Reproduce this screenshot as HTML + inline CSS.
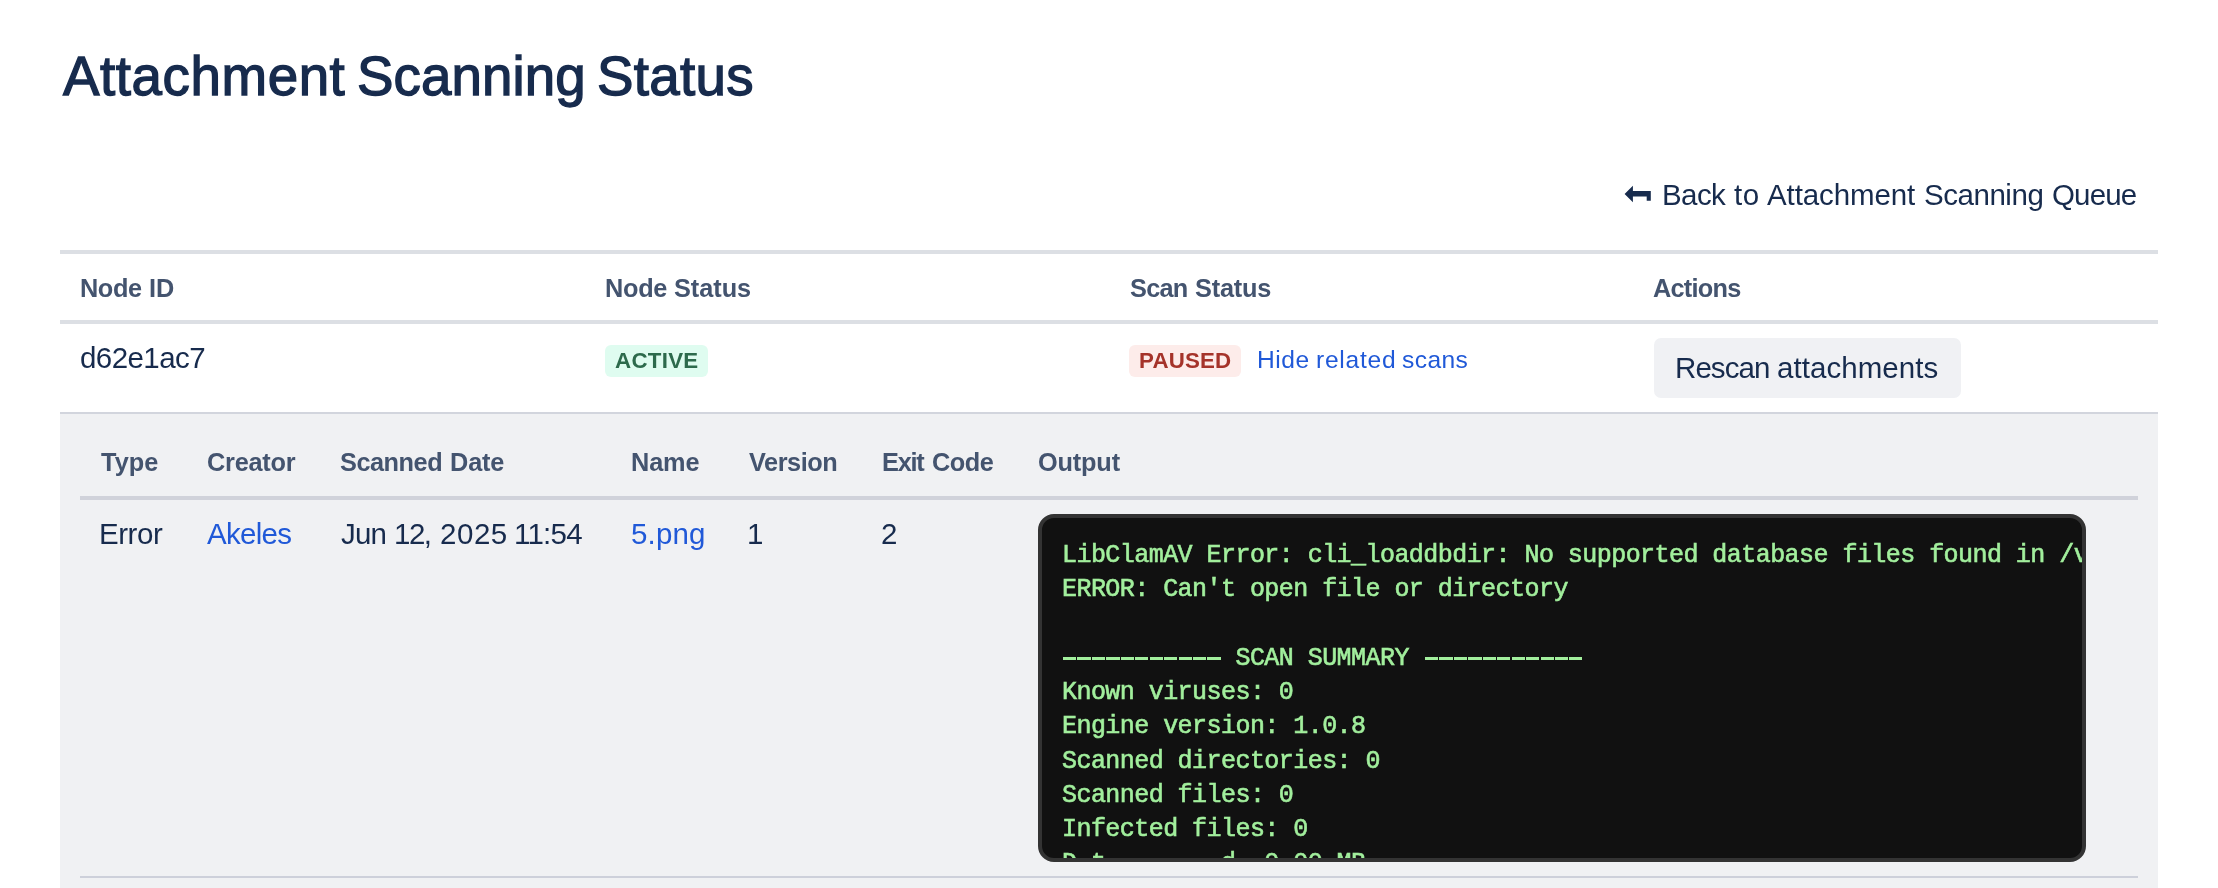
<!DOCTYPE html>
<html><head><meta charset="utf-8"><title>Attachment Scanning Status</title>
<style>
html,body{margin:0;padding:0;background:#fff;}
body{width:2218px;height:888px;position:relative;overflow:hidden;font-family:"Liberation Sans",sans-serif;}
.t{position:absolute;white-space:nowrap;line-height:40px;height:40px;will-change:transform;}
.ln{position:absolute;}
.box{position:absolute;}
pre{margin:0;font-family:"Liberation Mono",monospace;will-change:transform;}
pre i{visibility:hidden;font-style:normal}
.dash{color:transparent;-webkit-text-stroke:0;background:repeating-linear-gradient(to right,#A2EF9D 0,#A2EF9D 13.2px,transparent 13.2px,transparent 14.45px) no-repeat;background-size:100% 3.2px;background-position:1.33px 12.7px;}
</style></head><body>
<div class="ln" style="left:60px;top:250px;width:2098px;height:4px;background:#DCDFE4"></div>
<div class="ln" style="left:60px;top:320px;width:2098px;height:4px;background:#DCDFE4"></div>
<div class="ln" style="left:60px;top:412px;width:2098px;height:2px;background:#D2D5DD"></div>
<div class="box" style="left:60px;top:414px;width:2098px;height:474px;background:#F0F1F3"></div>
<div class="ln" style="left:80px;top:496px;width:2058px;height:4px;background:#D0D2DA"></div>
<div class="ln" style="left:80px;top:876px;width:2058px;height:2px;background:#CDD0DA"></div>
<div class="box" style="left:605px;top:345px;width:103px;height:32px;border-radius:6px;background:#DFFCF0"></div>
<div class="box" style="left:1129px;top:345px;width:112px;height:32px;border-radius:6px;background:#FDECEA"></div>
<div class="box" style="left:1654px;top:338px;width:307px;height:60px;border-radius:7px;background:#F0F1F4"></div>
<svg class="box" style="left:1620px;top:180px" width="40" height="30" viewBox="0 0 40 30"><path d="M4.6 13.9 L12.9 5.7 L12.9 11.1 L30.8 11.1 L30.8 20.7 L26.7 20.7 L26.7 16.6 L12.9 16.6 L12.9 22.3 Z" fill="#172B4D"/></svg>
<div class="box" id="code" style="left:1038px;top:514px;width:1040px;height:340px;border:4px solid #333;border-radius:16px;background:#111;overflow:hidden"><pre id="pre" style="position:absolute;left:19.73px;top:21.40px;font-size:25.0px;letter-spacing:-0.550px;line-height:34.286px;color:#A2EF9D;-webkit-text-stroke:0.6px #A2EF9D;white-space:pre">LibClamAV Error: cli_loaddbdir: No supported database files found in /var/lib/clamav
ERROR: Can't open file or directory

<span class="dash">-----------</span> SCAN SUMMARY <span class="dash">-----------</span>
Known viruses: 0
Engine version: 1.0.8
Scanned directories: 0
Scanned files: 0
Infected files: 0
<span style="position:relative;top:-0.7px">D<i>a</i>t<i>a scanne</i>d<i>:</i> 0.00 MB</span>
Data read: 0.00 MB (ratio 0.00:1)
Time: 0.005 sec (0 m 0 s)</pre></div>
<div class="t" id="title_0" style="left:62.50px;top:56.45px;font-size:54.7px;font-weight:400;color:#172B4D;letter-spacing:0.578px;-webkit-text-stroke:1.35px #172B4D;">Attachment</div>
<div class="t" id="title_1" style="left:357.00px;top:56.45px;font-size:54.7px;font-weight:400;color:#172B4D;letter-spacing:0.086px;-webkit-text-stroke:1.35px #172B4D;">Scanning</div>
<div class="t" id="title_2" style="left:597.00px;top:56.45px;font-size:54.7px;font-weight:400;color:#172B4D;letter-spacing:0.320px;-webkit-text-stroke:1.35px #172B4D;">Status</div>
<div class="t" id="back_0" style="left:1662.00px;top:174.98px;font-size:29.5px;font-weight:400;color:#172B4D;letter-spacing:-0.600px;">Back</div>
<div class="t" id="back_1" style="left:1733.50px;top:174.98px;font-size:29.5px;font-weight:400;color:#172B4D;letter-spacing:0.600px;">to</div>
<div class="t" id="back_2" style="left:1767.00px;top:174.98px;font-size:29.5px;font-weight:400;color:#172B4D;letter-spacing:-0.111px;">Attachment</div>
<div class="t" id="back_3" style="left:1924.00px;top:174.98px;font-size:29.5px;font-weight:400;color:#172B4D;letter-spacing:-0.457px;">Scanning</div>
<div class="t" id="back_4" style="left:2051.50px;top:174.98px;font-size:29.5px;font-weight:400;color:#172B4D;letter-spacing:-0.850px;">Queue</div>
<div class="t" id="h1_0" style="left:80.00px;top:268.23px;font-size:25.3px;font-weight:700;color:#44546F;letter-spacing:-0.400px;">Node</div>
<div class="t" id="h1_1" style="left:148.50px;top:268.23px;font-size:25.3px;font-weight:700;color:#44546F;letter-spacing:0.000px;">ID</div>
<div class="t" id="h2_0" style="left:605.00px;top:268.23px;font-size:25.3px;font-weight:700;color:#44546F;letter-spacing:-0.267px;">Node</div>
<div class="t" id="h2_1" style="left:673.50px;top:268.23px;font-size:25.3px;font-weight:700;color:#44546F;letter-spacing:-0.040px;">Status</div>
<div class="t" id="h3_0" style="left:1129.50px;top:268.23px;font-size:25.3px;font-weight:700;color:#44546F;letter-spacing:-0.733px;">Scan</div>
<div class="t" id="h3_1" style="left:1194.50px;top:268.23px;font-size:25.3px;font-weight:700;color:#44546F;letter-spacing:-0.200px;">Status</div>
<div class="t" id="h4" style="left:1653.40px;top:268.23px;font-size:25.3px;font-weight:700;color:#44546F;letter-spacing:-0.733px;">Actions</div>
<div class="t" id="nid" style="left:80.00px;top:337.58px;font-size:29.5px;font-weight:400;color:#172B4D;letter-spacing:-0.571px;">d62e1ac7</div>
<div class="t" id="active" style="left:614.50px;top:340.97px;font-size:22.3px;font-weight:700;color:#2D6A4C;letter-spacing:0.280px;">ACTIVE</div>
<div class="t" id="paused" style="left:1139.00px;top:340.97px;font-size:22.3px;font-weight:700;color:#A5332A;letter-spacing:0.160px;">PAUSED</div>
<div class="t" id="hide_0" style="left:1256.50px;top:340.18px;font-size:24.6px;font-weight:400;color:#2059D8;letter-spacing:0.533px;">Hide</div>
<div class="t" id="hide_1" style="left:1316.00px;top:340.18px;font-size:24.6px;font-weight:400;color:#2059D8;letter-spacing:0.733px;">related</div>
<div class="t" id="hide_2" style="left:1401.50px;top:340.18px;font-size:24.6px;font-weight:400;color:#2059D8;letter-spacing:0.400px;">scans</div>
<div class="t" id="btn_0" style="left:1675.00px;top:347.88px;font-size:29.5px;font-weight:400;color:#172B4D;letter-spacing:-0.920px;">Rescan</div>
<div class="t" id="btn_1" style="left:1777.00px;top:347.88px;font-size:29.5px;font-weight:400;color:#172B4D;letter-spacing:0.060px;">attachments</div>
<div class="t" id="n1" style="left:100.60px;top:441.83px;font-size:25.3px;font-weight:700;color:#44546F;letter-spacing:0.067px;">Type</div>
<div class="t" id="n2" style="left:207.40px;top:441.83px;font-size:25.3px;font-weight:700;color:#44546F;letter-spacing:-0.233px;">Creator</div>
<div class="t" id="n3_0" style="left:340.00px;top:441.83px;font-size:25.3px;font-weight:700;color:#44546F;letter-spacing:-0.467px;">Scanned</div>
<div class="t" id="n3_1" style="left:449.50px;top:441.83px;font-size:25.3px;font-weight:700;color:#44546F;letter-spacing:-0.133px;">Date</div>
<div class="t" id="n4" style="left:631.40px;top:441.83px;font-size:25.3px;font-weight:700;color:#44546F;letter-spacing:-0.133px;">Name</div>
<div class="t" id="n5" style="left:749.00px;top:441.83px;font-size:25.3px;font-weight:700;color:#44546F;letter-spacing:-0.433px;">Version</div>
<div class="t" id="n6_0" style="left:881.50px;top:441.83px;font-size:25.3px;font-weight:700;color:#44546F;letter-spacing:-1.200px;">Exit</div>
<div class="t" id="n6_1" style="left:931.50px;top:441.83px;font-size:25.3px;font-weight:700;color:#44546F;letter-spacing:-0.467px;">Code</div>
<div class="t" id="n7" style="left:1038.20px;top:441.83px;font-size:25.3px;font-weight:700;color:#44546F;letter-spacing:-0.160px;">Output</div>
<div class="t" id="r1" style="left:98.60px;top:514.18px;font-size:29.5px;font-weight:400;color:#172B4D;letter-spacing:-0.450px;">Error</div>
<div class="t" id="r2" style="left:207.40px;top:514.18px;font-size:29.5px;font-weight:400;color:#2059D8;letter-spacing:-0.720px;">Akeles</div>
<div class="t" id="r3_0" style="left:341.00px;top:514.18px;font-size:29.5px;font-weight:400;color:#172B4D;letter-spacing:-0.800px;">Jun</div>
<div class="t" id="r3_1" style="left:393.50px;top:514.18px;font-size:29.5px;font-weight:400;color:#172B4D;letter-spacing:-1.500px;">12,</div>
<div class="t" id="r3_2" style="left:439.50px;top:514.18px;font-size:29.5px;font-weight:400;color:#172B4D;letter-spacing:0.533px;">2025</div>
<div class="t" id="r3_3" style="left:513.50px;top:514.18px;font-size:29.5px;font-weight:400;color:#172B4D;letter-spacing:-0.750px;">11:54</div>
<div class="t" id="r4" style="left:631.40px;top:514.18px;font-size:29.5px;font-weight:400;color:#2059D8;letter-spacing:0.150px;">5.png</div>
<div class="t" id="r5" style="left:747.00px;top:514.18px;font-size:29.5px;font-weight:400;color:#172B4D;letter-spacing:0.000px;">1</div>
<div class="t" id="r6" style="left:881.20px;top:514.18px;font-size:29.5px;font-weight:400;color:#172B4D;letter-spacing:0.000px;">2</div>
</body></html>
